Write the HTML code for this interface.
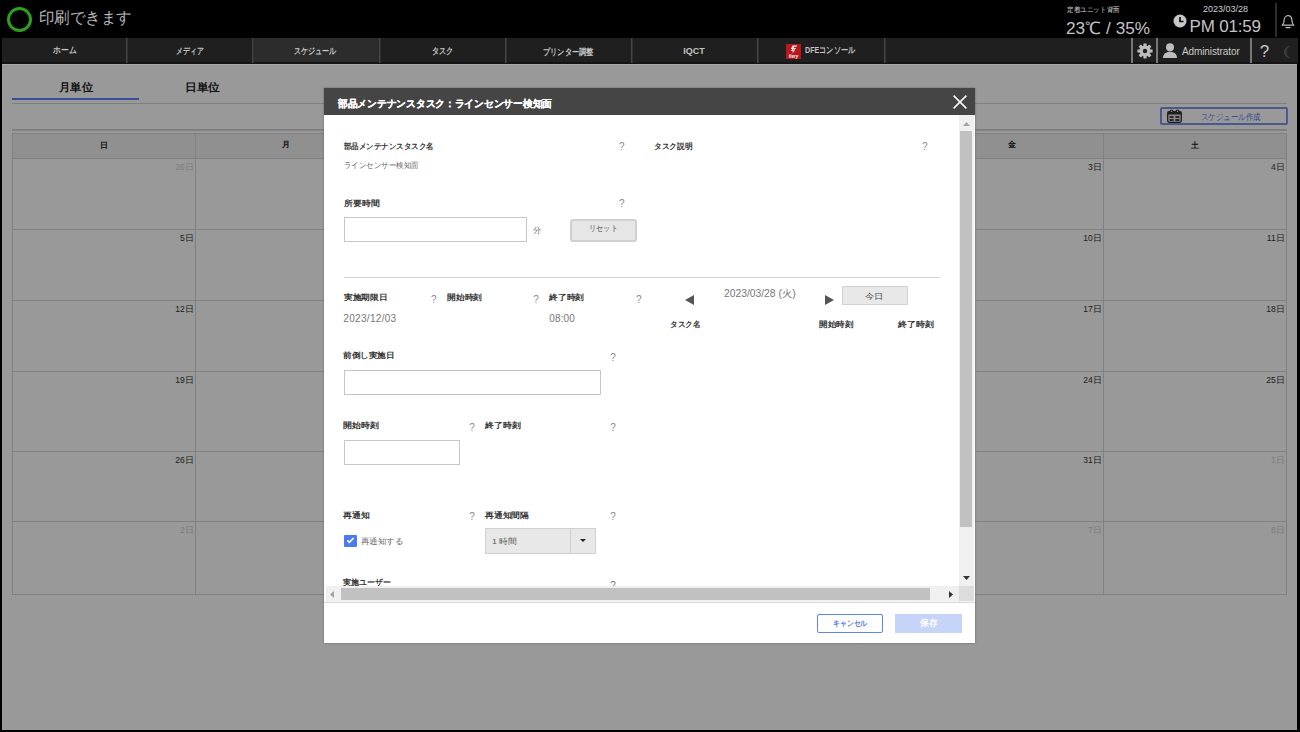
<!DOCTYPE html>
<html lang="ja"><head><meta charset="utf-8"><style>
*{box-sizing:border-box;margin:0;padding:0}
html,body{width:1300px;height:732px;overflow:hidden;background:#000;font-family:"Liberation Sans",sans-serif}
.t{position:absolute;white-space:nowrap;line-height:1;transform-origin:0 0}
.b{position:absolute}
.dn{position:absolute;width:60px;text-align:right;white-space:nowrap;line-height:1;font-weight:normal}
</style></head><body>
<div class="b" style="left:7px;top:7px;width:25px;height:25px;border:3px solid #2ea01e;border-radius:50%"></div>
<svg class="b" style="left:1173px;top:14px" width="15" height="14" viewBox="0 0 15 14"><circle cx="7" cy="7" r="6.5" fill="#c8c8c8"/><path d="M7 3v4.5h3.5" stroke="#000" stroke-width="1.6" fill="none"/></svg>
<div class="b" style="left:1275px;top:3px;width:1.5px;height:34px;background:#2c2c2c"></div>
<svg class="b" style="left:1280px;top:13px" width="16" height="16" viewBox="0 0 16 16"><path d="M2.2 12.2c1.4-1.1 1.9-2.4 1.9-4.6 0-2.9 1.7-4.9 3.9-4.9s3.9 2 3.9 4.9c0 2.2.5 3.5 1.9 4.6z" stroke="#bbb" stroke-width="1.2" fill="none" stroke-linejoin="round"/><path d="M6 14.6h4" stroke="#bbb" stroke-width="1.3" stroke-linecap="round"/></svg>
<div id="h_status" class="t" style="left:39.30px;top:9.60px;font-size:16.00px;color:#b8b8b8;font-weight:normal;transform:scaleX(0.968);">印刷できます</div>
<div id="h_unit" class="t" style="left:1066.58px;top:5.94px;font-size:7.00px;color:#d0d0d0;font-weight:normal;transform:scaleX(0.941);">定着ユニット背面</div>
<div id="h_temp" class="t" style="left:1066.30px;top:19.56px;font-size:17.00px;color:#c4c4c4;font-weight:normal;transform:scaleX(1.012);">23℃ / 35%</div>
<div id="h_date" class="t" style="left:1203.00px;top:5.42px;font-size:9.00px;color:#d0d0d0;font-weight:normal;">2023/03/28</div>
<div id="h_time" class="t" style="left:1189.60px;top:17.96px;font-size:17.00px;color:#c4c4c4;font-weight:normal;letter-spacing:-0.20px;">PM 01:59</div>
<div class="b" style="left:2px;top:38px;width:1296px;height:26px;background:#1f1f1f"></div>
<div class="b" style="left:2px;top:62px;width:1296px;height:2px;background:#141414"></div>
<div class="b" style="left:252px;top:38px;width:127px;height:24px;background:#2c2c2c"></div>
<div class="b" style="left:126px;top:38px;width:1px;height:25px;background:#464646"></div>
<div class="b" style="left:127px;top:38px;width:1px;height:25px;background:#303030"></div>
<div class="b" style="left:252px;top:38px;width:1px;height:25px;background:#464646"></div>
<div class="b" style="left:253px;top:38px;width:1px;height:25px;background:#303030"></div>
<div class="b" style="left:379px;top:38px;width:1px;height:25px;background:#464646"></div>
<div class="b" style="left:380px;top:38px;width:1px;height:25px;background:#303030"></div>
<div class="b" style="left:505px;top:38px;width:1px;height:25px;background:#464646"></div>
<div class="b" style="left:506px;top:38px;width:1px;height:25px;background:#303030"></div>
<div class="b" style="left:631px;top:38px;width:1px;height:25px;background:#464646"></div>
<div class="b" style="left:632px;top:38px;width:1px;height:25px;background:#303030"></div>
<div class="b" style="left:757px;top:38px;width:1px;height:25px;background:#464646"></div>
<div class="b" style="left:758px;top:38px;width:1px;height:25px;background:#303030"></div>
<div class="b" style="left:884px;top:38px;width:1px;height:25px;background:#464646"></div>
<div class="b" style="left:885px;top:38px;width:1px;height:25px;background:#303030"></div>
<div class="b" style="left:1131px;top:38px;width:2px;height:25px;background:#787878"></div>
<div class="b" style="left:1156px;top:38px;width:2px;height:25px;background:#787878"></div>
<div class="b" style="left:1250px;top:38px;width:2px;height:25px;background:#787878"></div>
<svg class="b" style="left:786px;top:44px" width="15" height="15" viewBox="0 0 15 15"><rect width="15" height="15" fill="#b8171c"/><path d="M6.6 1.6h4.6l-1 1.5H8.1l-.3.8h2.3l-1 1.5H7.3l-.3.8h2.1L6.3 9.4l.6-2.4H5.2l.7-1.9H4.9l.9-2z" fill="#e8e8e8"/><text x="7.5" y="13.6" font-size="4.6" fill="#eee" text-anchor="middle" font-family="Liberation Sans" font-style="italic" font-weight="bold">fiery</text></svg>
<svg class="b" style="left:1137px;top:43px" width="16" height="16" viewBox="-8 -8 16 16"><g fill="#bdbdbd"><rect x="-1.6" y="-7.6" width="3.2" height="3.4" rx=".5" transform="rotate(0)"/><rect x="-1.6" y="-7.6" width="3.2" height="3.4" rx=".5" transform="rotate(45)"/><rect x="-1.6" y="-7.6" width="3.2" height="3.4" rx=".5" transform="rotate(90)"/><rect x="-1.6" y="-7.6" width="3.2" height="3.4" rx=".5" transform="rotate(135)"/><rect x="-1.6" y="-7.6" width="3.2" height="3.4" rx=".5" transform="rotate(180)"/><rect x="-1.6" y="-7.6" width="3.2" height="3.4" rx=".5" transform="rotate(225)"/><rect x="-1.6" y="-7.6" width="3.2" height="3.4" rx=".5" transform="rotate(270)"/><rect x="-1.6" y="-7.6" width="3.2" height="3.4" rx=".5" transform="rotate(315)"/><circle r="5.6"/></g><circle r="2.2" fill="#1f1f1f"/></svg>
<svg class="b" style="left:1163px;top:43px" width="14" height="16" viewBox="0 0 14 16"><circle cx="7" cy="4.3" r="4" fill="#bdbdbd"/><path d="M0 15c0-4.2 3-6.3 7-6.3s7 2.1 7 6.3z" fill="#bdbdbd"/></svg>
<svg class="b" style="left:1282px;top:45px" width="12" height="14" viewBox="0 0 12 14"><path d="M9 0.5C4.5 1 2 3.8 2 7s2.5 6 7 6.5C6 12 4.6 9.8 4.6 7S6 2 9 0.5z" fill="#3c3c3c"/></svg>
<div id="n_home" class="t" style="left:52.58px;top:45.96px;font-size:9.00px;color:#c2c2c2;font-weight:bold;transform:scaleX(0.864);">ホーム</div>
<div id="n_media" class="t" style="left:175.85px;top:46.87px;font-size:9.00px;color:#c2c2c2;font-weight:bold;transform:scaleX(0.764);">メディア</div>
<div id="n_sched" class="t" style="left:294.40px;top:46.87px;font-size:9.00px;color:#c2c2c2;font-weight:bold;transform:scaleX(0.785);">スケジュール</div>
<div id="n_task" class="t" style="left:432.15px;top:46.87px;font-size:9.00px;color:#c2c2c2;font-weight:bold;transform:scaleX(0.793);">タスク</div>
<div id="n_printer" class="t" style="left:542.80px;top:47.57px;font-size:9.00px;color:#c2c2c2;font-weight:bold;transform:scaleX(0.800);">プリンター調整</div>
<div id="n_iqct" class="t" style="left:683.30px;top:46.77px;font-size:9.00px;color:#c2c2c2;font-weight:bold;">IQCT</div>
<div id="n_dfe" class="t" style="left:805.00px;top:46.10px;font-size:9.00px;color:#c2c2c2;font-weight:bold;transform:scaleX(0.792);">DFEコンソール</div>
<div id="n_admin" class="t" style="left:1181.95px;top:46.55px;font-size:10.00px;color:#c8c8c8;font-weight:normal;letter-spacing:-0.09px;">Administrator</div>
<div id="n_help" class="t" style="left:1259.70px;top:42.96px;font-size:17.00px;color:#c8c8c8;font-weight:normal;">?</div>
<div class="b" style="left:2px;top:64px;width:1295px;height:666px;background:#fff"></div>
<div class="b" style="left:12px;top:98px;width:127px;height:2px;background:#6384fb"></div>
<div class="b" style="left:12px;top:103px;width:1275px;height:1px;background:#d6d6d6"></div>
<div class="b" style="left:12px;top:129px;width:1275px;height:2px;background:#d6d6d6"></div>
<div class="b" style="left:1160px;top:107px;width:128px;height:18px;border:2px solid #7b97f2;border-radius:2px"></div>
<svg class="b" style="left:1167px;top:109px" width="15" height="14" viewBox="0 0 15 14"><rect x="0.7" y="2.7" width="13.6" height="10.6" rx="1.5" fill="#e6e6e6" stroke="#333" stroke-width="1.3"/><rect x="0.7" y="2.7" width="13.6" height="2.8" fill="#333"/><g fill="#444"><rect x="2.6" y="7" width="4" height="2"/><rect x="8.4" y="7" width="4" height="2"/><rect x="2.6" y="10" width="4" height="2"/><rect x="8.4" y="10" width="4" height="2"/></g><circle cx="4.5" cy="2.3" r="1.9" fill="#333"/><circle cx="10.5" cy="2.3" r="1.9" fill="#333"/><circle cx="4.5" cy="2.3" r=".8" fill="#e6e6e6"/><circle cx="10.5" cy="2.3" r=".8" fill="#e6e6e6"/></svg>
<div class="b" style="left:12px;top:133px;width:1275px;height:25px;background:#f1f1f1"></div>
<div class="b" style="left:12px;top:133px;width:1275px;height:1px;background:#d6d6d6"></div>
<div class="b" style="left:12px;top:158px;width:1275px;height:1px;background:#d6d6d6"></div>
<div class="b" style="left:12px;top:229px;width:1275px;height:1px;background:#d6d6d6"></div>
<div class="b" style="left:12px;top:300px;width:1275px;height:1px;background:#d6d6d6"></div>
<div class="b" style="left:12px;top:371px;width:1275px;height:1px;background:#d6d6d6"></div>
<div class="b" style="left:12px;top:451px;width:1275px;height:1px;background:#d6d6d6"></div>
<div class="b" style="left:12px;top:521px;width:1275px;height:1px;background:#d6d6d6"></div>
<div class="b" style="left:12px;top:594px;width:1275px;height:1px;background:#d6d6d6"></div>
<div class="b" style="left:12px;top:133px;width:1px;height:462px;background:#d6d6d6"></div>
<div class="b" style="left:195px;top:133px;width:1px;height:462px;background:#d6d6d6"></div>
<div class="b" style="left:377px;top:133px;width:1px;height:462px;background:#d6d6d6"></div>
<div class="b" style="left:558px;top:133px;width:1px;height:462px;background:#d6d6d6"></div>
<div class="b" style="left:740px;top:133px;width:1px;height:462px;background:#d6d6d6"></div>
<div class="b" style="left:921px;top:133px;width:1px;height:462px;background:#d6d6d6"></div>
<div class="b" style="left:1103px;top:133px;width:1px;height:462px;background:#d6d6d6"></div>
<div class="b" style="left:1286px;top:133px;width:1px;height:462px;background:#d6d6d6"></div>
<div id="p_month" class="t" style="left:59.00px;top:82.23px;font-size:11.00px;color:#222;font-weight:bold;transform:scaleX(1.035);">月単位</div>
<div id="p_day" class="t" style="left:184.75px;top:82.23px;font-size:11.00px;color:#222;font-weight:bold;transform:scaleX(1.068);">日単位</div>
<div id="p_create" class="t" style="left:1201.45px;top:112.73px;font-size:8.50px;color:#5b7bf0;font-weight:normal;transform:scaleX(0.826);">スケジュール作成</div>
<div id="c_h0" class="t" style="left:99.90px;top:141.54px;font-size:8.00px;color:#1a1a1a;font-weight:bold;">日</div>
<div id="c_h1" class="t" style="left:281.80px;top:141.34px;font-size:8.00px;color:#1a1a1a;font-weight:bold;">月</div>
<div id="c_h5" class="t" style="left:1008.15px;top:141.19px;font-size:8.00px;color:#1a1a1a;font-weight:bold;">金</div>
<div id="c_h6" class="t" style="left:1190.60px;top:141.89px;font-size:8.00px;color:#1a1a1a;font-weight:bold;">土</div>
<div class="dn" id="dn00" style="left:133.68px;top:162.70px;font-size:8.50px;letter-spacing:0.00px;color:#d0d0d0">26日</div>
<div class="dn" id="dn01" style="left:315.28px;top:162.70px;font-size:8.50px;letter-spacing:0.00px;color:#d0d0d0">27日</div>
<div class="dn" id="dn02" style="left:496.88px;top:162.70px;font-size:8.50px;letter-spacing:0.00px;color:#d0d0d0">28日</div>
<div class="dn" id="dn03" style="left:678.48px;top:162.70px;font-size:8.50px;letter-spacing:0.00px;color:#333">1日</div>
<div class="dn" id="dn04" style="left:860.08px;top:162.70px;font-size:8.50px;letter-spacing:0.00px;color:#333">2日</div>
<div class="dn" id="dn05" style="left:1041.68px;top:162.70px;font-size:8.50px;letter-spacing:0.00px;color:#333">3日</div>
<div class="dn" id="dn06" style="left:1224.68px;top:162.70px;font-size:8.50px;letter-spacing:0.00px;color:#333">4日</div>
<div class="dn" id="dn10" style="left:133.68px;top:233.70px;font-size:8.50px;letter-spacing:0.00px;color:#333">5日</div>
<div class="dn" id="dn11" style="left:315.28px;top:233.70px;font-size:8.50px;letter-spacing:0.00px;color:#333">6日</div>
<div class="dn" id="dn12" style="left:496.88px;top:233.70px;font-size:8.50px;letter-spacing:0.00px;color:#333">7日</div>
<div class="dn" id="dn13" style="left:678.48px;top:233.70px;font-size:8.50px;letter-spacing:0.00px;color:#333">8日</div>
<div class="dn" id="dn14" style="left:860.08px;top:233.70px;font-size:8.50px;letter-spacing:0.00px;color:#333">9日</div>
<div class="dn" id="dn15" style="left:1041.68px;top:233.70px;font-size:8.50px;letter-spacing:0.00px;color:#333">10日</div>
<div class="dn" id="dn16" style="left:1224.68px;top:233.70px;font-size:8.50px;letter-spacing:0.00px;color:#333">11日</div>
<div class="dn" id="dn20" style="left:133.68px;top:304.70px;font-size:8.50px;letter-spacing:0.00px;color:#333">12日</div>
<div class="dn" id="dn21" style="left:315.28px;top:304.70px;font-size:8.50px;letter-spacing:0.00px;color:#333">13日</div>
<div class="dn" id="dn22" style="left:496.88px;top:304.70px;font-size:8.50px;letter-spacing:0.00px;color:#333">14日</div>
<div class="dn" id="dn23" style="left:678.48px;top:304.70px;font-size:8.50px;letter-spacing:0.00px;color:#333">15日</div>
<div class="dn" id="dn24" style="left:860.08px;top:304.70px;font-size:8.50px;letter-spacing:0.00px;color:#333">16日</div>
<div class="dn" id="dn25" style="left:1041.68px;top:304.70px;font-size:8.50px;letter-spacing:0.00px;color:#333">17日</div>
<div class="dn" id="dn26" style="left:1224.68px;top:304.70px;font-size:8.50px;letter-spacing:0.00px;color:#333">18日</div>
<div class="dn" id="dn30" style="left:133.68px;top:375.70px;font-size:8.50px;letter-spacing:0.00px;color:#333">19日</div>
<div class="dn" id="dn31" style="left:315.28px;top:375.70px;font-size:8.50px;letter-spacing:0.00px;color:#333">20日</div>
<div class="dn" id="dn32" style="left:496.88px;top:375.70px;font-size:8.50px;letter-spacing:0.00px;color:#333">21日</div>
<div class="dn" id="dn33" style="left:678.48px;top:375.70px;font-size:8.50px;letter-spacing:0.00px;color:#333">22日</div>
<div class="dn" id="dn34" style="left:860.08px;top:375.70px;font-size:8.50px;letter-spacing:0.00px;color:#333">23日</div>
<div class="dn" id="dn35" style="left:1041.68px;top:375.70px;font-size:8.50px;letter-spacing:0.00px;color:#333">24日</div>
<div class="dn" id="dn36" style="left:1224.68px;top:375.70px;font-size:8.50px;letter-spacing:0.00px;color:#333">25日</div>
<div class="dn" id="dn40" style="left:133.68px;top:455.70px;font-size:8.50px;letter-spacing:0.00px;color:#333">26日</div>
<div class="dn" id="dn41" style="left:315.28px;top:455.70px;font-size:8.50px;letter-spacing:0.00px;color:#333">27日</div>
<div class="dn" id="dn42" style="left:496.88px;top:455.70px;font-size:8.50px;letter-spacing:0.00px;color:#333">28日</div>
<div class="dn" id="dn43" style="left:678.48px;top:455.70px;font-size:8.50px;letter-spacing:0.00px;color:#333">29日</div>
<div class="dn" id="dn44" style="left:860.08px;top:455.70px;font-size:8.50px;letter-spacing:0.00px;color:#333">30日</div>
<div class="dn" id="dn45" style="left:1041.68px;top:455.70px;font-size:8.50px;letter-spacing:0.00px;color:#333">31日</div>
<div class="dn" id="dn46" style="left:1224.68px;top:455.70px;font-size:8.50px;letter-spacing:0.00px;color:#d0d0d0">1日</div>
<div class="dn" id="dn50" style="left:133.68px;top:525.70px;font-size:8.50px;letter-spacing:0.00px;color:#d0d0d0">2日</div>
<div class="dn" id="dn51" style="left:315.28px;top:525.70px;font-size:8.50px;letter-spacing:0.00px;color:#d0d0d0">3日</div>
<div class="dn" id="dn52" style="left:496.88px;top:525.70px;font-size:8.50px;letter-spacing:0.00px;color:#d0d0d0">4日</div>
<div class="dn" id="dn53" style="left:678.48px;top:525.70px;font-size:8.50px;letter-spacing:0.00px;color:#d0d0d0">5日</div>
<div class="dn" id="dn54" style="left:860.08px;top:525.70px;font-size:8.50px;letter-spacing:0.00px;color:#d0d0d0">6日</div>
<div class="dn" id="dn55" style="left:1041.68px;top:525.70px;font-size:8.50px;letter-spacing:0.00px;color:#d0d0d0">7日</div>
<div class="dn" id="dn56" style="left:1224.68px;top:525.70px;font-size:8.50px;letter-spacing:0.00px;color:#d0d0d0">8日</div>
<div class="b" style="left:2px;top:64px;width:1295px;height:666px;background:rgba(0,0,0,0.40)"></div>
<div class="b" style="left:2px;top:64px;width:1295px;height:1px;background:#a9a9a9"></div>
<div class="b" style="left:324px;top:88px;width:651px;height:555px;background:#fff;box-shadow:0 0 2px rgba(0,0,0,.35)"></div>
<div class="b" style="left:324px;top:88px;width:651px;height:27px;background:#454545"></div>
<svg class="b" style="left:953px;top:95px" width="14" height="14" viewBox="0 0 14 14"><path d="M0.6 0.6L13.4 13.4M13.4 0.6L0.6 13.4" stroke="#fff" stroke-width="1.5"/></svg>
<div class="b" style="left:344px;top:217px;width:183px;height:25px;border:1px solid #c6c6c6"></div>
<div class="b" style="left:570px;top:219px;width:67px;height:23px;background:#e6e6e6;border:2px solid #d0d0d0;border-radius:3px"></div>
<div class="b" style="left:344px;top:277px;width:596px;height:1px;background:#d2d2d2"></div>
<svg class="b" style="left:685px;top:295px" width="9" height="10" viewBox="0 0 9 10"><path d="M9 0v10L0 5z" fill="#555"/></svg>
<svg class="b" style="left:825px;top:295px" width="9" height="10" viewBox="0 0 9 10"><path d="M0 0v10L9 5z" fill="#555"/></svg>
<div class="b" style="left:842px;top:286px;width:66px;height:19px;background:#e8e8e8;border:1px solid #d2d2d2"></div>
<div class="b" style="left:344px;top:370px;width:257px;height:25px;border:1px solid #c6c6c6"></div>
<div class="b" style="left:344px;top:440px;width:116px;height:25px;border:1px solid #c6c6c6"></div>
<div class="b" style="left:344px;top:535px;width:13px;height:12px;background:#4b7bec;border-radius:1px"></div>
<svg class="b" style="left:344px;top:535px" width="13" height="12" viewBox="0 0 13 12"><path d="M3.3 5.4l2.1 2 4.2-4.4" stroke="#fff" stroke-width="1.7" fill="none"/></svg>
<div class="b" style="left:485px;top:528px;width:111px;height:26px;background:#e8e8e8;border:1px solid #d0d0d0"></div>
<div class="b" style="left:570px;top:528px;width:1px;height:26px;background:#d0d0d0"></div>
<svg class="b" style="left:580px;top:539px" width="6" height="3" viewBox="0 0 6 3"><path d="M0 0h6L3 3z" fill="#222"/></svg>
<div id="m_title" class="t" style="left:337.50px;top:98.52px;font-size:10.00px;color:#fff;font-weight:bold;transform:scaleX(0.973);-webkit-text-stroke:0.2px #fff;">部品メンテナンスタスク：ラインセンサー検知面</div>
<div id="m_l1" class="t" style="left:344.20px;top:142.69px;font-size:8.00px;color:#333;font-weight:bold;transform:scaleX(0.932);">部品メンテナンスタスク名</div>
<div id="m_q1" class="t" style="left:619.10px;top:142.15px;font-size:10.00px;color:#8a8a8a;font-weight:normal;">?</div>
<div id="m_l2" class="t" style="left:654.30px;top:142.74px;font-size:8.00px;color:#333;font-weight:bold;transform:scaleX(0.965);">タスク説明</div>
<div id="m_q2" class="t" style="left:921.90px;top:142.15px;font-size:10.00px;color:#8a8a8a;font-weight:normal;">?</div>
<div id="m_v1" class="t" style="left:343.50px;top:161.94px;font-size:8.00px;color:#666;font-weight:normal;transform:scaleX(0.930);">ラインセンサー検知面</div>
<div id="m_l3" class="t" style="left:343.55px;top:199.94px;font-size:8.00px;color:#333;font-weight:bold;transform:scaleX(1.112);">所要時間</div>
<div id="m_q3" class="t" style="left:619.10px;top:199.35px;font-size:10.00px;color:#8a8a8a;font-weight:normal;">?</div>
<div id="m_min" class="t" style="left:533.40px;top:226.59px;font-size:8.00px;color:#666;font-weight:normal;">分</div>
<div id="m_reset" class="t" style="left:589.40px;top:225.12px;font-size:8.00px;color:#4a4a4a;font-weight:normal;transform:scaleX(0.896);">リセット</div>
<div id="m_l4" class="t" style="left:344.20px;top:294.29px;font-size:8.00px;color:#333;font-weight:bold;transform:scaleX(1.090);">実施期限日</div>
<div id="m_q4" class="t" style="left:431.00px;top:295.15px;font-size:10.00px;color:#8a8a8a;font-weight:normal;">?</div>
<div id="m_l5" class="t" style="left:447.00px;top:294.29px;font-size:8.00px;color:#333;font-weight:bold;transform:scaleX(1.094);">開始時刻</div>
<div id="m_q5" class="t" style="left:533.35px;top:295.15px;font-size:10.00px;color:#8a8a8a;font-weight:normal;">?</div>
<div id="m_l6" class="t" style="left:549.20px;top:294.29px;font-size:8.00px;color:#333;font-weight:bold;transform:scaleX(1.096);">終了時刻</div>
<div id="m_q6" class="t" style="left:635.90px;top:295.15px;font-size:10.00px;color:#8a8a8a;font-weight:normal;">?</div>
<div id="m_v2" class="t" style="left:343.35px;top:314.35px;font-size:10.00px;color:#777;font-weight:normal;letter-spacing:0.31px;">2023/12/03</div>
<div id="m_v3" class="t" style="left:549.20px;top:314.35px;font-size:10.00px;color:#777;font-weight:normal;letter-spacing:0.17px;">08:00</div>
<div id="m_date" class="t" style="left:724.20px;top:289.35px;font-size:10.00px;color:#777;font-weight:normal;transform:scaleX(1.030);">2023/03/28 (火)</div>
<div id="m_today" class="t" style="left:865.42px;top:292.82px;font-size:8.00px;color:#4a4a4a;font-weight:normal;transform:scaleX(1.167);">今日</div>
<div id="m_c1" class="t" style="left:670.40px;top:321.09px;font-size:8.00px;color:#333;font-weight:bold;transform:scaleX(0.951);">タスク名</div>
<div id="m_c2" class="t" style="left:819.00px;top:321.09px;font-size:8.00px;color:#333;font-weight:bold;transform:scaleX(1.065);">開始時刻</div>
<div id="m_c3" class="t" style="left:898.00px;top:321.09px;font-size:8.00px;color:#333;font-weight:bold;transform:scaleX(1.114);">終了時刻</div>
<div id="m_l7" class="t" style="left:343.15px;top:352.29px;font-size:8.00px;color:#333;font-weight:bold;transform:scaleX(1.076);">前倒し実施日</div>
<div id="m_q7" class="t" style="left:610.35px;top:352.50px;font-size:10.00px;color:#8a8a8a;font-weight:normal;">?</div>
<div id="m_l8" class="t" style="left:343.15px;top:422.34px;font-size:8.00px;color:#333;font-weight:bold;transform:scaleX(1.111);">開始時刻</div>
<div id="m_q8" class="t" style="left:469.35px;top:422.50px;font-size:10.00px;color:#8a8a8a;font-weight:normal;">?</div>
<div id="m_l9" class="t" style="left:484.55px;top:422.34px;font-size:8.00px;color:#333;font-weight:bold;transform:scaleX(1.114);">終了時刻</div>
<div id="m_q9" class="t" style="left:610.35px;top:422.50px;font-size:10.00px;color:#8a8a8a;font-weight:normal;">?</div>
<div id="m_l10" class="t" style="left:343.15px;top:511.54px;font-size:8.00px;color:#333;font-weight:bold;transform:scaleX(1.109);">再通知</div>
<div id="m_q10" class="t" style="left:469.35px;top:511.50px;font-size:10.00px;color:#8a8a8a;font-weight:normal;">?</div>
<div id="m_l11" class="t" style="left:485.40px;top:511.54px;font-size:8.00px;color:#333;font-weight:bold;transform:scaleX(1.102);">再通知間隔</div>
<div id="m_q11" class="t" style="left:610.35px;top:511.50px;font-size:10.00px;color:#8a8a8a;font-weight:normal;">?</div>
<div id="m_v4" class="t" style="left:361.15px;top:538.14px;font-size:8.00px;color:#666;font-weight:normal;transform:scaleX(1.055);">再通知する</div>
<div id="m_sel" class="t" style="left:491.70px;top:537.54px;font-size:8.00px;color:#555;font-weight:normal;transform:scaleX(1.102);">1 時間</div>
<div id="m_l12" class="t" style="left:343.15px;top:578.64px;font-size:8.00px;color:#333;font-weight:bold;transform:scaleX(0.991);">実施ユーザー</div>
<div id="m_q12" class="t" style="left:610.35px;top:580.80px;font-size:10.00px;color:#777;font-weight:normal;">?</div>
<div class="b" style="left:959px;top:115px;width:15px;height:471px;background:#f0f0f0"></div>
<div class="b" style="left:960px;top:131px;width:12px;height:396px;background:#c1c1c1"></div>
<svg class="b" style="left:963px;top:122px" width="7" height="4" viewBox="0 0 7 4"><path d="M0 4h7L3.5 0z" fill="#a3a3a3"/></svg>
<svg class="b" style="left:963px;top:576px" width="7" height="4" viewBox="0 0 7 4"><path d="M0 0h7L3.5 4z" fill="#333"/></svg>
<div class="b" style="left:326px;top:586px;width:633px;height:15px;background:#f0f0f0"></div>
<div class="b" style="left:341px;top:588px;width:589px;height:12px;background:#c1c1c1"></div>
<svg class="b" style="left:330px;top:591px" width="4" height="7" viewBox="0 0 4 7"><path d="M4 0v7L0 3.5z" fill="#a3a3a3"/></svg>
<svg class="b" style="left:949px;top:591px" width="4" height="7" viewBox="0 0 4 7"><path d="M0 0v7L4 3.5z" fill="#333"/></svg>
<div class="b" style="left:959px;top:586px;width:15px;height:15px;background:#dcdcdc"></div>
<div class="b" style="left:324px;top:601px;width:651px;height:1px;background:#f4f4f4"></div>
<div class="b" style="left:324px;top:602px;width:651px;height:1px;background:#d9d9d9"></div>
<div class="b" style="left:817px;top:614px;width:66px;height:19px;border:1.5px solid #5b85f0;border-radius:2px"></div>
<div class="b" style="left:895px;top:614px;width:67px;height:19px;background:#c6d4f8"></div>
<div id="m_cancel" class="t" style="left:832.70px;top:619.59px;font-size:8.00px;color:#5b7de6;font-weight:bold;transform:scaleX(0.856);">キャンセル</div>
<div id="m_save" class="t" style="left:920.34px;top:619.04px;font-size:8.50px;color:#fff;font-weight:bold;transform:scaleX(0.968);">保存</div>
</body></html>
